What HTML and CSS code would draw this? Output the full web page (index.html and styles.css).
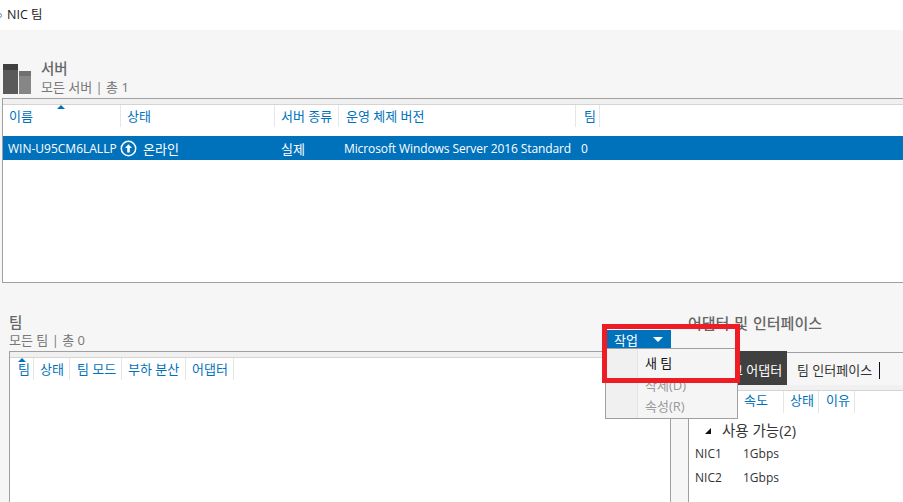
FILE: index.html
```html
<!DOCTYPE html>
<html lang="ko">
<head>
<meta charset="utf-8">
<title>NIC 팀</title>
<link rel="stylesheet" href="styles.css">
</head>
<body>
<header class="titlebar"><span class="app-dot"></span><span>NIC 팀</span></header>
<main class="content">
  <section class="servers">
    <div class="section-head">
      <svg class="server-icon" width="28" height="30" viewBox="0 0 28 30"><rect x="0" y="0" width="15" height="6" fill="#404040"/><rect x="0" y="6" width="15" height="24" fill="#5a5a5a"/><rect x="16" y="7" width="12" height="5" fill="#707070"/><rect x="16" y="12" width="12" height="18" fill="#868686"/></svg>
      <div>
        <h2 class="title">서버</h2>
        <p class="sub">모든 서버 | 총 1</p>
      </div>
    </div>
    <div class="table server-table">
      <div class="strip"></div>
      <div class="cols server-cols header">
        <span class="col sorted">이름</span><span class="col">상태</span><span class="col">서버 종류</span><span class="col">운영 체제 버전</span><span class="col">팀</span>
      </div>
      <div class="cols server-cols selected">
        <span class="cell-name">WIN-U95CM6LALLP</span>
        <span class="cell-status"><svg width="17" height="17" viewBox="0 0 17 17"><circle cx="8.5" cy="8.5" r="7.2" fill="none" stroke="#fff" stroke-width="1.5"/><path d="M8.5 4.2 12 8H9.8v4.6H7.2V8H5z" fill="#fff"/></svg>온라인</span>
        <span class="cell-type">실제</span>
        <span class="cell-os">Microsoft Windows Server 2016 Standard</span>
        <span class="cell-team">0</span>
      </div>
    </div>
  </section>
  <section class="lower">
    <div class="teams">
      <h2 class="title">팀</h2>
      <p class="sub sub-team">모든 팀 | 총 0</p>
      <div class="table team-table">
        <div class="strip"></div>
        <div class="cols team-cols header">
          <span class="col sorted">팀</span><span class="col">상태</span><span class="col">팀 모드</span><span class="col">부하 분산</span><span class="col">어댑터</span>
        </div>
      </div>
    </div>
    <div class="adapters">
      <h2 class="title wide">어댑터 및 인터페이스</h2>
      <div class="tabs">
        <span class="tab active">네트워크 어댑터</span>
        <span class="tab">팀 인터페이스</span>
        <span class="tab-bar"></span>
      </div>
      <div class="table adapter-table">
        <div class="strip"></div>
        <div class="cols adapter-cols header">
          <span class="col">이름</span><span class="col">속도</span><span class="col">상태</span><span class="col">이유</span>
        </div>
        <div class="group"><span class="twisty"></span>사용 가능(2)</div>
        <div class="nic"><span>NIC1</span><span>1Gbps</span></div>
        <div class="nic"><span>NIC2</span><span>1Gbps</span></div>
      </div>
    </div>
  </section>
</main>
<div class="tasks">
  <div class="tasks-btn"><span>작업</span><span class="caret"></span></div>
  <ul class="menu">
    <li class="on">새 팀</li>
    <li>삭제(D)</li>
    <li class="last">속성(R)</li>
  </ul>
</div>
<div class="highlight"></div>
</body>
</html>
```
FILE: styles.css
```css
* { box-sizing: border-box; }
html, body { margin: 0; height: 100%; }
body {
  width: 903px; height: 502px; overflow: hidden; position: relative;
  background: #f6f6f6; color: #444;
  font: 13px/16px "Open Sans", "Noto Sans CJK KR", sans-serif;
}
h2, p, ul { margin: 0; padding: 0; }
.titlebar {
  height: 30px; background: #fff; color: #222; display: flex; align-items: center;
  padding-left: 7px; position: relative; font-size: 12.5px;
}
.app-dot { position: absolute; left: -3px; top: 13px; width: 5px; height: 5px; border-radius: 50%; border: 1px solid #4a90c8; }
.content { display: flex; flex-direction: column; }
.servers { padding: 30px 0 0 2px; }
.section-head { display: flex; align-items: flex-start; gap: 10px; height: 38px; padding-left: 1px; }
.server-icon { margin-top: 4px; flex: none; }
.title { font-size: 14.5px; line-height: 18px; font-weight: 500; color: #666; }
.wide { font-size: 15px; word-spacing: 1px; }
.sub { font-size: 13px; line-height: 18px; color: #777; }
.sub-team { margin-top: -1px; }
.table { background: #fff; border: 1px solid #a0a0a0; border-right: 0; }
.server-table { height: 185px; }
.strip { height: 6px; background: #f0f0f0; border-bottom: 1px solid #d4d4d4; }
.cols { display: grid; align-items: stretch; }
.header { height: 31px; color: #0072bc; }
.col { padding: 3px 0 0 6px; border-right: 1px solid #e6e6e6; height: 22px; position: relative; white-space: nowrap; }
.sorted::before {
  content: ""; position: absolute; top: 0; width: 0; height: 0;
  border: 4px solid transparent; border-top: 0; border-bottom: 4px solid #0072bc;
}
.server-cols { grid-template-columns: 118px 154px 64px 237px 24px; }
.server-cols .col:nth-child(4) { padding-left: 7px; }
.server-cols .col:nth-child(5) { padding-left: 8px; }
.server-cols .sorted::before { left: 54px; }
.selected { height: 24px; background: #0072bc; color: #fff; align-items: center; padding-top: 1px; font-size: 12px; }
.cell-name { padding-left: 5px; white-space: nowrap; }
.cell-status { display: flex; align-items: center; gap: 6px; margin-left: -1px; font-size: 13px; }
.cell-type { padding-left: 6px; font-size: 13px; }
.cell-os { padding-left: 5px; white-space: nowrap; letter-spacing: -0.1px; }
.cell-team { padding-left: 5px; }
.lower { display: flex; gap: 17px; padding-top: 31px; }
.teams { width: 662px; margin-left: 9px; flex: none; }
.team-table { height: 160px; margin-top: 2px; border-right: 1px solid #a0a0a0; }
.team-cols { grid-template-columns: 24px 36px 52px 64px 48px; justify-content: start; }
.team-cols .col:first-child { padding-left: 8px; }
.team-cols .col:nth-child(3) { padding-left: 7px; }
.team-cols .sorted::before { left: 8px; }
.adapters { flex: 1; }
.tabs { display: flex; height: 33px; margin-top: 20px; border-top: 1px solid #a0a0a0; align-items: stretch; }
.tab { padding: 9px 10px 0; white-space: nowrap; color: #333; }
.tab.active { background: #404040; color: #fff; width: 99px; margin-top: -2px; padding: 11px 0 0 7px; }
.tab-bar { width: 1px; height: 17px; background: #111; margin: 9px 0 0 -3px; }
.adapter-table { height: 130px; border-top: 0; }
.adapter-cols { grid-template-columns: 49px 46px 35px 36px; height: 27px; justify-content: start; }
.adapter-cols .col { padding-top: 1px; }
.adapter-cols .col:nth-child(4) { padding-left: 7px; }
.group { font-size: 14.5px; line-height: 18px; color: #333; padding: 4px 0 0 33px; position: relative; }
.twisty {
  position: absolute; left: 16px; top: 10px; width: 0; height: 0;
  border-left: 6px solid transparent; border-bottom: 6px solid #111;
}
.nic { display: grid; grid-template-columns: 48px auto; justify-content: start; padding-left: 6px; height: 24px; align-items: center; color: #333; font-size: 12px; }
.group + .nic { margin-top: 2px; }
.tasks { position: absolute; left: 605px; top: 330px; width: 133px; }
.tasks-btn {
  margin-left: 2px; width: 64px; height: 18px; background: #0072bc; color: #fff;
  display: flex; align-items: center; justify-content: space-between; padding: 1px 8px 0 7px;
}
.caret { width: 0; height: 0; border: 5px solid transparent; border-top: 5px solid #fff; border-bottom: 0; }
.menu {
  list-style: none; height: 71px; padding: 2px 0 0 32px; color: #999;
  background: linear-gradient(to right, #f0f0f0 31px, #e4e4e4 31px, #e4e4e4 32px, #f5f5f5 32px);
  border: 1px solid #a0a0a0;
}
.menu li { height: 22px; line-height: 22px; padding-left: 7px; }
.menu .on { color: #111; height: 23px; line-height: 24px; }
.menu .last { margin-top: -1px; }
.highlight { position: absolute; left: 602px; top: 324px; width: 138px; height: 59px; border: 5px solid #ee1c25; }
```
